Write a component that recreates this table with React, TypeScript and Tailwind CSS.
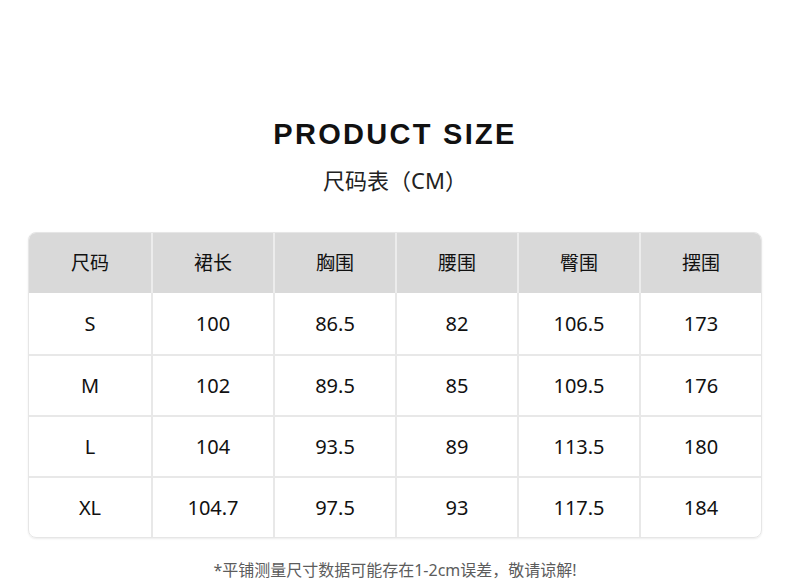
import React from "react";

const headers = ["尺码", "裙长", "胸围", "腰围", "臀围", "摆围"];

const rows = [
    ["S", "100", "86.5", "82", "106.5", "173"],
    ["M", "102", "89.5", "85", "109.5", "176"],
    ["L", "104", "93.5", "89", "113.5", "180"],
    ["XL", "104.7", "97.5", "93", "117.5", "184"],
];

const font = { fontFamily: '"Noto Sans", "Noto Sans CJK SC", sans-serif' };

export default function App() {
    return (
        <div className="w-[790px] h-[580px] bg-white overflow-hidden" style={font}>
            <div className="pt-[116px] flex flex-col items-center">
                <h1 className="text-[29px] leading-[36px] font-bold tracking-[2.3px] text-[#111] font-['Liberation_Sans',sans-serif]">
                    PRODUCT SIZE
                </h1>
                <p className="mt-[13px] text-[22px] leading-[30px] text-[#222]">
                    尺码表（CM）
                </p>
            </div>

            {/* size table */}
            <div className="mt-[37px] mx-[28px] w-[734px] rounded-[8px] border border-[#e6e6e6] overflow-hidden shadow-[0_1px_2px_rgba(0,0,0,0.08)]">
                <div className="grid grid-cols-6 bg-[#d9d9d9] h-[60px]">
                    {headers.map((h, i) => (
                        <div
                            key={h}
                            className={`flex items-center justify-center text-[19px] text-[#111] ${i > 0 ? "border-l-2 border-[#ececec]" : ""}`}
                        >
                            {h}
                        </div>
                    ))}
                </div>
                {rows.map((r, ri) => (
                    <div key={ri} className={`grid grid-cols-6 h-[61px] ${ri > 0 ? "border-t-2 border-[#e8e8e8]" : ""}`}>
                        {r.map((c, i) => (
                            <div
                                key={i}
                                className={`flex items-center justify-center text-[20px] text-[#111] ${i > 0 ? "border-l-2 border-[#e8e8e8]" : ""}`}
                            >
                                {c}
                            </div>
                        ))}
                    </div>
                ))}
            </div>

            <p className="mt-[22px] text-center text-[16px] leading-[20px] text-[#5c5c5c]">
                *平铺测量尺寸数据可能存在1-2cm误差，敬请谅解!
            </p>
        </div>
    );
}
